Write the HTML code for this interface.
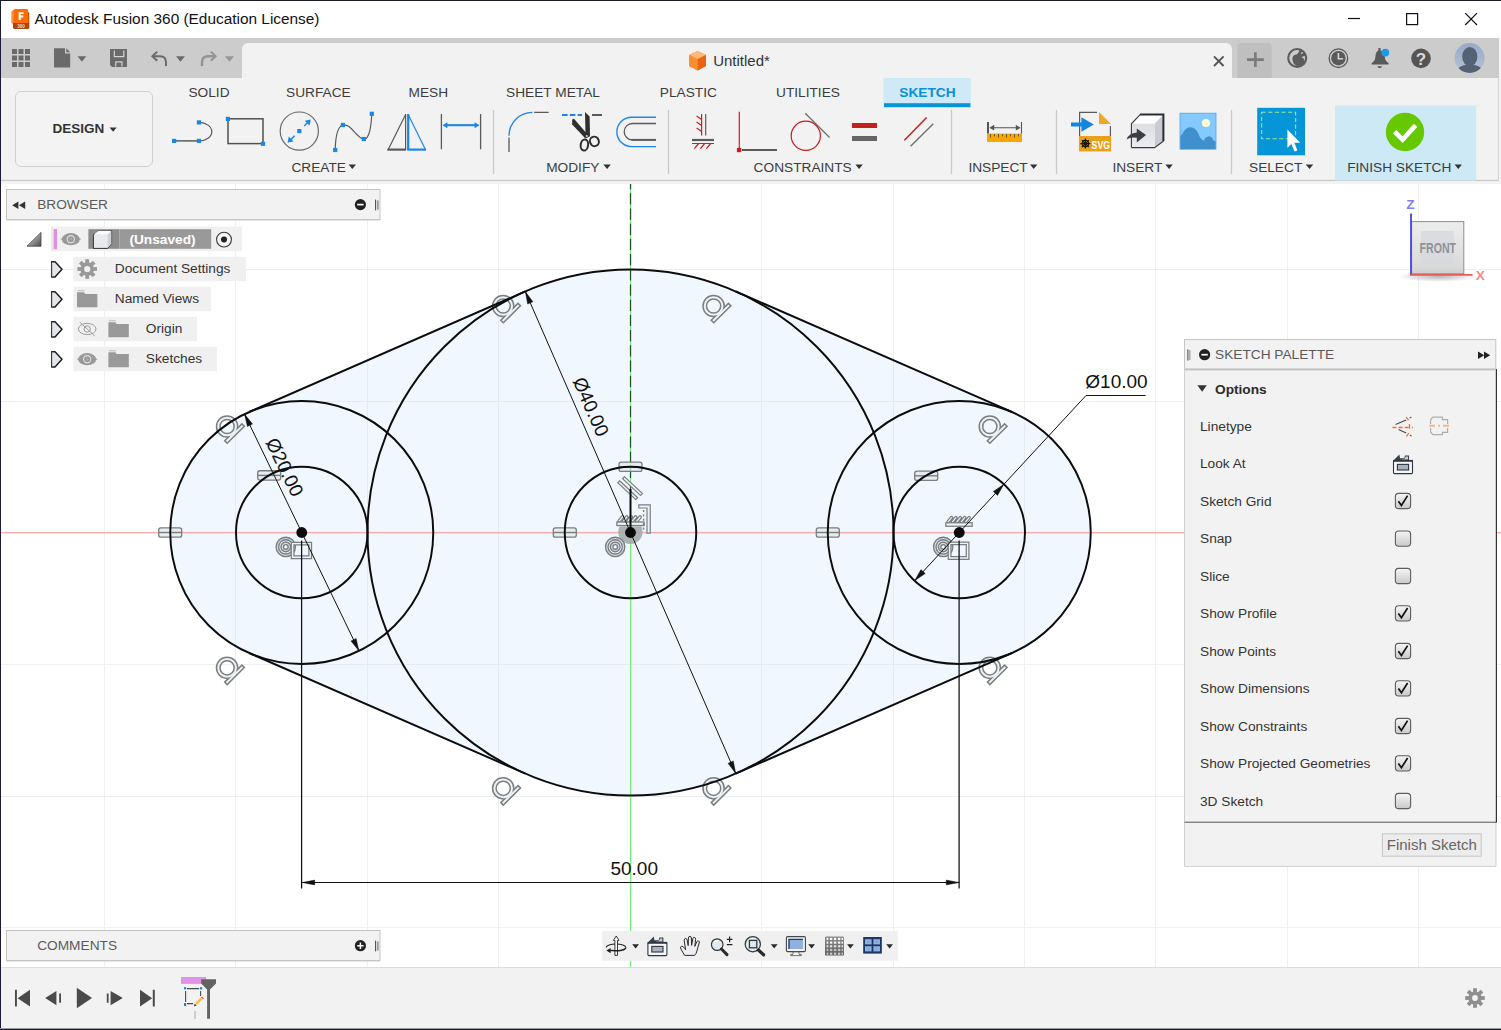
<!DOCTYPE html>
<html>
<head>
<meta charset="utf-8">
<title>Autodesk Fusion 360</title>
<style>
html,body{margin:0;padding:0;}
body{width:1501px;height:1030px;overflow:hidden;background:#fff;font-family:"Liberation Sans",sans-serif;color:#333;position:relative;}
.a{position:absolute;}
.t{position:absolute;white-space:nowrap;line-height:1;}
#titlebar{left:1px;top:1px;width:1500px;height:37px;background:#fff;}
#qat{left:1px;top:38px;width:1498px;height:40px;background:#cccccc;}
#doctab{left:242px;top:43px;width:990px;height:36px;background:#f2f2f2;border-radius:6px 6px 0 0;}
#toolbar{left:1px;top:78px;width:1500px;height:102px;background:#f2f2f2;}
#tbline{left:1px;top:180px;width:1498px;height:1px;background:#c8c8c8;box-shadow:0 -1px 0 rgba(0,0,0,0.03);}
#tbshadow{left:1px;top:181px;width:1500px;height:3px;background:linear-gradient(#eeeeee,#f3f3f3 40%);}
#rstrip{left:1499px;top:38px;width:2px;height:146px;background:#f4f4f4;}
#tbright{left:1498px;top:78px;width:1px;height:103px;background:#d2d2d2;}
#canvas{left:1px;top:184px;width:1500px;height:783px;background:#fff;}
#bottombar{left:1px;top:967px;width:1500px;height:62px;background:#f2f2f2;}
#bline{left:1px;top:967px;width:1500px;height:1px;background:#dcdcdc;}
#edgeL{left:0;top:0;width:1px;height:1030px;background:#1a1c3a;}
#edgeT{left:0;top:0;width:1501px;height:1px;background:#1a1c2c;}
#edgeB{left:0;top:1028px;width:1501px;height:2px;background:linear-gradient(#9a9ba2 0,#9a9ba2 50%,#1a1c2c 50%);}
.tab{font-size:13.5px;color:#3c3c3c;top:85px;}
.grp{font-size:13.5px;color:#3c3c3c;top:160px;}
.sep{position:absolute;top:110px;width:1px;height:64px;background:#c8c8c8;}
.panelhdr{position:absolute;background:#f2f2f2;border:1px solid #c6c6c6;box-sizing:border-box;box-shadow:0 1px 0 #d0d0d0;}
.brow{position:absolute;height:24px;background:#f0f0f0;}
.btxt{position:absolute;font-size:13.5px;color:#333;white-space:nowrap;line-height:24px;top:0;}
.plab{position:absolute;left:1200px;font-size:13.5px;color:#333;white-space:nowrap;line-height:16px;}
.cb{position:absolute;left:1395px;width:16px;height:16px;box-sizing:border-box;border:1px solid #666;border-radius:3.5px;background:linear-gradient(#f4f4f4,#cfcfcf);}
</style>
</head>
<body>
<div class="a" id="titlebar"></div>
<div class="a" id="qat"></div>
<div class="a" id="doctab"></div>
<div class="a" id="toolbar"></div>
<div class="a" id="canvas"></div>
<!--CANVAS-SVG-START--><svg class="a" id="cv" style="left:0;top:0" width="1501" height="1030" viewBox="0 0 1501 1030">
<defs><clipPath id="cvclip"><rect x="1" y="184" width="1500" height="783"/></clipPath>
<g id="gTan"><circle cx="0" cy="0" r="8.85"/><path d="M0.1 14.3 L14.8 -0.2"/></g>
<g id="gCon"><circle cx="0" cy="0" r="8.4"/><circle cx="0" cy="0" r="3.6"/></g>
<g id="gPar"><path d="M-8 -5.5 L8 9.5 M-3.2 -9.6 L12.8 5.4"/></g>
<g id="gEq"><rect x="-11.5" y="-4.65" width="23" height="9.3" rx="2.2" fill="#e4e8ea" fill-opacity="0.75" stroke="#797e82" stroke-width="1.3"/><path d="M-11.5 0H11.5" stroke="#797e82" stroke-width="1.4" fill="none"/></g>
</defs>
<g clip-path="url(#cvclip)">
<path d="M104 184h1v783h-1zM235 184h1v783h-1zM367 184h1v783h-1zM498 184h1v783h-1zM761 184h1v783h-1zM893 184h1v783h-1zM1024 184h1v783h-1zM1155 184h1v783h-1zM1287 184h1v783h-1zM1418 184h1v783h-1zM1 269h1500v1h-1500zM1 401h1500v1h-1500zM1 664h1500v1h-1500zM1 796h1500v1h-1500zM1 927h1500v1h-1500z" fill="#000" fill-opacity="0.062" stroke="none"/>
<path d="M249.15 411.98 L525.30 291.46 A263 263 0 0 1 735.70 291.46 L1011.85 411.98 A131.5 131.5 0 0 1 1011.85 653.02 L735.70 773.54 A263 263 0 0 1 525.30 773.54 L249.15 653.02 A131.5 131.5 0 0 1 249.15 411.98 Z" fill="#c8e0fa" fill-opacity="0.27" stroke="none"/>
<rect x="1" y="532" width="1500" height="1" fill="#f6acac"/><rect x="1" y="533" width="1500" height="1" fill="#f6acac" fill-opacity="0.38"/><rect x="1" y="531" width="1500" height="1" fill="#f6acac" fill-opacity="0.08"/>
<rect x="630" y="184" width="1" height="783" fill="#70ed73"/><rect x="629" y="184" width="1" height="783" fill="#ffffff" fill-opacity="0.45"/><rect x="631" y="184" width="1" height="783" fill="#d8f8dc" fill-opacity="0.6"/>
<path d="M630.5 184V489" stroke="#23502a" stroke-width="1.25" stroke-dasharray="11.2 4" stroke-dashoffset="5.9" fill="none"/>
<g><use href="#gTan" x="503.2" y="306.0" fill="none" stroke="#797e82" stroke-width="5" stroke-linecap="square"/><use href="#gTan" x="503.2" y="306.0" fill="none" stroke="#eef3f6" stroke-width="2" stroke-linecap="square"/><use href="#gTan" x="713.6" y="306.0" fill="none" stroke="#797e82" stroke-width="5" stroke-linecap="square"/><use href="#gTan" x="713.6" y="306.0" fill="none" stroke="#eef3f6" stroke-width="2" stroke-linecap="square"/><use href="#gTan" x="227.1" y="426.5" fill="none" stroke="#797e82" stroke-width="5" stroke-linecap="square"/><use href="#gTan" x="227.1" y="426.5" fill="none" stroke="#eef3f6" stroke-width="2" stroke-linecap="square"/><use href="#gTan" x="989.8" y="426.5" fill="none" stroke="#797e82" stroke-width="5" stroke-linecap="square"/><use href="#gTan" x="989.8" y="426.5" fill="none" stroke="#eef3f6" stroke-width="2" stroke-linecap="square"/><use href="#gTan" x="503.2" y="788.3" fill="none" stroke="#797e82" stroke-width="5" stroke-linecap="square"/><use href="#gTan" x="503.2" y="788.3" fill="none" stroke="#eef3f6" stroke-width="2" stroke-linecap="square"/><use href="#gTan" x="713.6" y="788.3" fill="none" stroke="#797e82" stroke-width="5" stroke-linecap="square"/><use href="#gTan" x="713.6" y="788.3" fill="none" stroke="#eef3f6" stroke-width="2" stroke-linecap="square"/><use href="#gTan" x="227.1" y="667.8" fill="none" stroke="#797e82" stroke-width="5" stroke-linecap="square"/><use href="#gTan" x="227.1" y="667.8" fill="none" stroke="#eef3f6" stroke-width="2" stroke-linecap="square"/><use href="#gTan" x="989.8" y="667.8" fill="none" stroke="#797e82" stroke-width="5" stroke-linecap="square"/><use href="#gTan" x="989.8" y="667.8" fill="none" stroke="#eef3f6" stroke-width="2" stroke-linecap="square"/><use href="#gEq" x="170.2" y="532.5"/><use href="#gEq" x="564.8" y="532.5"/><use href="#gEq" x="827.8" y="532.5"/><use href="#gEq" x="630.5" y="466.8"/><use href="#gEq" x="269.2" y="475.4"/><use href="#gEq" x="926.2" y="475.8"/><path d="M619.4 526.5 A12.2 12.2 0 1 0 641.4 526.5 Z" fill="#a4a8ab" fill-opacity="0.9"/><use href="#gCon" x="285.8" y="546.9" fill="none" stroke="#797e82" stroke-width="3.9" stroke-linecap="square"/><use href="#gCon" x="285.8" y="546.9" fill="none" stroke="#d3d8dc" stroke-width="1.2" stroke-linecap="square"/><use href="#gCon" x="615.2" y="546.9" fill="none" stroke="#797e82" stroke-width="3.9" stroke-linecap="square"/><use href="#gCon" x="615.2" y="546.9" fill="none" stroke="#d3d8dc" stroke-width="1.2" stroke-linecap="square"/><use href="#gCon" x="943.2" y="546.9" fill="none" stroke="#797e82" stroke-width="3.9" stroke-linecap="square"/><use href="#gCon" x="943.2" y="546.9" fill="none" stroke="#d3d8dc" stroke-width="1.2" stroke-linecap="square"/><use href="#gPar" x="627.7" y="488.2" fill="none" stroke="#797e82" stroke-width="3.9" stroke-linecap="square"/><use href="#gPar" x="627.7" y="488.2" fill="none" stroke="#eef3f6" stroke-width="1.5" stroke-linecap="square"/><path d="M292.6 543.6H310.2V557.2H292.6Z" fill="none" stroke="#797e82" stroke-width="3.9"/><path d="M292.6 543.6H310.2V557.2H292.6Z" fill="none" stroke="#eef3f6" stroke-width="1.4"/><path d="M949.6 543.4H967.6V558.0H949.6Z" fill="none" stroke="#797e82" stroke-width="3.9"/><path d="M949.6 543.4H967.6V558.0H949.6Z" fill="none" stroke="#eef3f6" stroke-width="1.4"/><path d="M619.1 521.2l3.4 -4.2M623.5 521.2l3.4 -4.2M627.9 521.2l3.4 -4.2M632.3 521.2l3.4 -4.2M636.7 521.2l3.4 -4.2" fill="none" stroke="#797e82" stroke-width="3.6" stroke-linecap="round"/><path d="M619.1 521.2l3.4 -4.2M623.5 521.2l3.4 -4.2M627.9 521.2l3.4 -4.2M632.3 521.2l3.4 -4.2M636.7 521.2l3.4 -4.2" fill="none" stroke="#eef3f6" stroke-width="1.2" stroke-linecap="round"/><path d="M618.6 523.8H642.4" fill="none" stroke="#797e82" stroke-width="4.8" stroke-linecap="square"/><path d="M618.6 523.8H642.4" fill="none" stroke="#eef3f6" stroke-width="2.2" stroke-linecap="square"/><path d="M948.1 521.9l3.4 -4.2M952.5 521.9l3.4 -4.2M956.9 521.9l3.4 -4.2M961.3 521.9l3.4 -4.2M965.7 521.9l3.4 -4.2" fill="none" stroke="#797e82" stroke-width="3.6" stroke-linecap="round"/><path d="M948.1 521.9l3.4 -4.2M952.5 521.9l3.4 -4.2M956.9 521.9l3.4 -4.2M961.3 521.9l3.4 -4.2M965.7 521.9l3.4 -4.2" fill="none" stroke="#eef3f6" stroke-width="1.2" stroke-linecap="round"/><path d="M947.6 524.5H970.4" fill="none" stroke="#797e82" stroke-width="4.8" stroke-linecap="square"/><path d="M947.6 524.5H970.4" fill="none" stroke="#eef3f6" stroke-width="2.2" stroke-linecap="square"/><path d="M640.4 506.4H648.6V531.6" fill="none" stroke="#797e82" stroke-width="4.4" stroke-linecap="square"/><path d="M640.4 506.4H648.6V531.6" fill="none" stroke="#eef3f6" stroke-width="2" stroke-linecap="square"/><path d="M643.6 510V530.5" fill="none" stroke="#797e82" stroke-width="1.4" stroke-dasharray="2 2.4"/></g>
<g fill="none" stroke="#0c0c0c" stroke-width="1.95"><circle cx="630.50" cy="532.50" r="263.00"/><circle cx="630.50" cy="532.50" r="65.75"/><circle cx="301.75" cy="532.50" r="131.50"/><circle cx="301.75" cy="532.50" r="65.75"/><circle cx="959.25" cy="532.50" r="131.50"/><circle cx="959.25" cy="532.50" r="65.75"/><path d="M249.15 411.98 L525.30 291.46 M735.70 291.46 L1011.85 411.98 M249.15 653.02 L525.30 773.54 M735.70 773.54 L1011.85 653.02 M630.5 489V532.5"/></g>
<path d="M525.30 291.46 L735.70 773.54 M244.52 414.11 L358.98 650.89 M1145.5 395.5 H1086.0 L914.60 580.76 M301.8 882.5H959.2" stroke="#111" stroke-width="1.0" fill="none"/>
<path d="M525.30 291.46 L532.96 301.75 L527.64 304.07 Z M735.70 773.54 L728.04 763.25 L733.36 760.93 Z M244.52 414.11 L252.57 424.10 L247.35 426.62 Z M358.98 650.89 L350.93 640.90 L356.15 638.38 Z M1003.90 484.24 L997.54 495.38 L993.28 491.44 Z M914.60 580.76 L920.96 569.62 L925.22 573.56 Z M301.75 882.50 L314.75 880.10 L314.75 884.90 Z M959.25 882.50 L946.25 884.90 L946.25 880.10 Z" fill="#111" stroke="#111" stroke-width="0.4"/>
<path d="M301.6 540.5V888.5 M959.1 540.5V888.5" stroke="#111" stroke-width="1.25" fill="none"/>
<circle cx="301.75" cy="532.50" r="5.4" fill="#0a0a0a"/>
<circle cx="630.50" cy="532.50" r="5.4" fill="#0a0a0a"/>
<circle cx="959.25" cy="532.50" r="5.4" fill="#0a0a0a"/>
<text x="584.9" y="409.3" transform="rotate(66.42 584.9 409.3)" font-size="19" text-anchor="middle" fill="#111" font-family="Liberation Sans, sans-serif">&#216;40.00</text>
<text x="278.7" y="470.0" transform="rotate(64.20 278.7 470.0)" font-size="19" text-anchor="middle" fill="#111" font-family="Liberation Sans, sans-serif">&#216;20.00</text>
<text x="1116.5" y="387.6" transform="rotate(0.00 1116.5 387.6)" font-size="19" text-anchor="middle" fill="#111" font-family="Liberation Sans, sans-serif">&#216;10.00</text>
<text x="634.2" y="875.0" transform="rotate(0.00 634.2 875.0)" font-size="19" text-anchor="middle" fill="#111" font-family="Liberation Sans, sans-serif">50.00</text>
</g></svg><!--CANVAS-SVG-END-->
<div class="a" id="tbline"></div>
<div class="a" id="tbshadow"></div>
<div class="a" id="rstrip"></div>
<div class="a" id="tbright"></div>
<div class="a" id="bottombar"></div>
<div class="a" id="bline"></div>
<!--TOP-START--><svg class="a" id="top" style="left:0;top:0" width="1501" height="184" viewBox="0 0 1501 184" font-family="Liberation Sans, sans-serif">
<!-- app logo -->
<g>
<path d="M11.3 11.2 L14 9.6 V24.2 L11.3 23.2 Z" fill="#ff8f3f"/>
<rect x="13.6" y="9" width="14.6" height="15" rx="1.6" fill="#ff6b00"/>
<path d="M28 12 L29.3 13 V24 H28 Z" fill="#c95400"/>
<path d="M13 23 H29.3 V27.6 Q29.3 29 27.9 29 H14.4 Q13 29 13 27.6 Z" fill="#a8480a"/>
<path d="M18.6 12.2 H23.6 V14.1 H20.8 V15.6 H23.2 V17.4 H20.8 V20 H18.6 Z" fill="#fff"/>
<text x="21.1" y="27.9" font-size="4.6" font-weight="700" fill="#f3d9c6" text-anchor="middle">360</text>
</g>
<text x="34.6" y="24" font-size="15.4" fill="#111">Autodesk Fusion 360 (Education License)</text>
<!-- window controls -->
<g stroke="#111" stroke-width="1.2" fill="none">
<path d="M1348 18.5 H1360"/>
<rect x="1406.6" y="13.6" width="11" height="11"/>
<path d="M1465.2 13.2 L1477 25 M1477 13.2 L1465.2 25"/>
</g>
<!-- QAT icons -->
<g fill="#6a6a6a">
<path d="M12 49h5v5h-5zM18.5 49h5v5h-5zM25 49h5v5h-5zM12 55.5h5v5h-5zM18.5 55.5h5v5h-5zM25 55.5h5v5h-5zM12 62h5v5h-5zM18.5 62h5v5h-5zM25 62h5v5h-5z"/>
<path d="M54 48.2 H65 V53.4 H70.2 V67.6 H54 Z M66.3 48.2 L70.2 52.2 H66.3 Z"/>
<path d="M77.6 56.2 H86.2 L81.9 61.8 Z"/>
<path d="M110 49 H127 V67 H112 L110 65 Z"/>
<path d="M176 56.2 H185 L180.5 61.8 Z"/>
</g>
<path d="M114.3 50.6 V56.6 H123.8 V50.6 M115.8 66.4 V61.9 H121.9 V66.4" stroke="#d4d4d4" stroke-width="1.2" fill="none"/>
<path d="M152.5 56.2 H160 Q166 56.2 166 62.5 V66" stroke="#6a6a6a" stroke-width="2" fill="none"/>
<path d="M157.2 51.6 L152.4 56.2 L157.2 60.8" stroke="#6a6a6a" stroke-width="2" fill="none"/>
<g opacity="0.8">
<path d="M215.5 56.2 H208 Q202 56.2 202 62.5 V66" stroke="#858585" stroke-width="2.4" fill="none"/>
<path d="M210.8 51.6 L215.6 56.2 L210.8 60.8" stroke="#858585" stroke-width="2" fill="none"/>
<path d="M225 56.2 H234 L229.5 61.8 Z" fill="#8a8a8a"/>
</g>
<!-- doc tab -->
<g>
<path d="M697.6 51 L706 55 V66 L697.6 70.4 L689.2 66 V55 Z" fill="#f47d20"/>
<path d="M697.6 51 L706 55 L697.6 59.2 L689.2 55 Z" fill="#ffb877"/>
<path d="M697.6 59.2 L706 55 V66 L697.6 70.4 Z" fill="#e8650e"/>
<path d="M689.2 55 L697.6 59.2 V70.4 L689.2 66 Z" fill="#fa8c33"/>
</g>
<text x="713.2" y="66" font-size="15" fill="#333">Untitled*</text>
<path d="M1214 56.4 L1223.6 66 M1223.6 56.4 L1214 66" stroke="#555" stroke-width="1.9" fill="none"/>
<!-- plus button -->
<path d="M1237.4 78 V47 Q1237.4 43 1241.4 43 H1267.8 Q1271.8 43 1271.8 47 V78 Z" fill="#bfbfbf"/>
<path d="M1255.4 52.2 V67 M1247 59.6 H1263.8" stroke="#7a7a7a" stroke-width="2.6" fill="none"/>
<!-- right icons -->
<g>
<circle cx="1297.2" cy="58" r="9" fill="none" stroke="#5c5c5c" stroke-width="2.1"/>
<path d="M1292.4 59 Q1292.2 54.8 1296.2 54.4 Q1298.6 54 1299.2 50 L1302.4 51 L1300.6 54.2 L1304.6 52.6 L1305.6 55.4 L1301.6 57 Q1306.4 59.6 1303.8 64 Q1300 67 1295.8 65.4 Q1292.6 63.4 1292.4 59 Z" fill="#5c5c5c"/>
<circle cx="1338.4" cy="58.2" r="9.3" fill="none" stroke="#5a5a5a" stroke-width="1.3"/>
<circle cx="1338.4" cy="58.2" r="7.2" fill="#5a5a5a"/>
<path d="M1338.4 53 V58.8 H1343" stroke="#d6d6d6" stroke-width="1.6" fill="none"/>
<path d="M1378.4 48 H1380.6 V50.6 Q1384.6 51.8 1384.8 57 Q1385 61 1388.6 63 V64.4 H1371.6 V63 Q1375.2 61 1375.4 57 Q1375.6 51.8 1378.4 50.6 Z" fill="#595959"/>
<path d="M1377.2 66.2 H1382.2 L1380.8 68 H1378.6 Z" fill="#595959"/>
<circle cx="1385.3" cy="52.6" r="3.9" fill="#1b9be3"/>
<circle cx="1421" cy="58.4" r="9.8" fill="#555"/>
<text x="1421" y="64.6" font-size="17" font-weight="700" fill="#d9d9d9" text-anchor="middle">?</text>
</g>
<defs><clipPath id="avc"><circle cx="1469.6" cy="58" r="15"/></clipPath>
<linearGradient id="avg" x1="0" y1="0" x2="0" y2="1"><stop offset="0" stop-color="#9aaac6"/><stop offset="1" stop-color="#b4c2d6"/></linearGradient></defs>
<circle cx="1469.6" cy="58" r="15" fill="url(#avg)"/>
<g clip-path="url(#avc)" fill="#556174">
<ellipse cx="1469.8" cy="56.6" rx="7.6" ry="9.6"/>
<path d="M1456 76 Q1456 66.5 1465 65 H1474.6 Q1483.6 66.5 1483.6 76 Z"/>
</g>
<!-- DESIGN button -->
<rect x="15.5" y="91.5" width="137" height="75" rx="5.5" fill="#f3f3f3" stroke="#d0d0d0" stroke-width="1"/>
<text x="52.4" y="133" font-size="13.5" font-weight="700" fill="#333">DESIGN</text>
<path d="M109.6 127.4 H116.6 L113.1 131.8 Z" fill="#333"/>
<!-- tabs -->
<rect x="883.4" y="78" width="87.6" height="29.2" fill="#cfe9f6"/>
<rect x="884" y="103.2" width="86.4" height="4" fill="#0696d7"/>
<g font-size="13.7" fill="#3c3c3c" text-anchor="middle">
<text x="209" y="97.2">SOLID</text>
<text x="318.4" y="97.2">SURFACE</text>
<text x="428.3" y="97.2">MESH</text>
<text x="553" y="97.2">SHEET METAL</text>
<text x="688.4" y="97.2">PLASTIC</text>
<text x="808" y="97.2">UTILITIES</text>
<text x="927.4" y="97.2" font-weight="700" fill="#0b8ed4">SKETCH</text>
</g>
<!-- separators -->
<path d="M493.5 110V174M668.5 110V174M951.5 110V174M1056.5 110V174M1231.5 110V174" stroke="#c9c9c9" stroke-width="1.3" fill="none"/>
<!-- finish sketch bg -->
<rect x="1335" y="105.5" width="141.2" height="75" fill="#cde9f6"/>
<!-- group labels -->
<g font-size="13.7" fill="#3c3c3c">
<text x="291.4" y="171.5">CREATE</text>
<text x="546.2" y="171.5">MODIFY</text>
<text x="753.6" y="171.5">CONSTRAINTS</text>
<text x="968.4" y="171.5">INSPECT</text>
<text x="1112.4" y="171.5">INSERT</text>
<text x="1249" y="171.5">SELECT</text>
<text x="1347.2" y="171.5">FINISH SKETCH</text>
</g>
<g fill="#333">
<path d="M348.6 164.4 H356 L352.3 169 Z"/>
<path d="M603.4 164.4 H610.8 L607.1 169 Z"/>
<path d="M855.4 164.4 H862.8 L859.1 169 Z"/>
<path d="M1030 164.4 H1037.4 L1033.7 169 Z"/>
<path d="M1165.4 164.4 H1172.8 L1169.1 169 Z"/>
<path d="M1305.8 164.4 H1313.2 L1309.5 169 Z"/>
<path d="M1454.6 164.4 H1462 L1458.3 169 Z"/>
</g>
<!-- CREATE icons -->
<g fill="none" stroke="#5a5a5a" stroke-width="1.2">
<path d="M174 140.9 H199" stroke-width="1.5"/><path d="M199 122.4 A12.8 9.3 0 0 1 199 141"/>
<rect x="228" y="118.8" width="35" height="24.8" stroke-width="1.5" stroke="#505050"/>
<circle cx="299.3" cy="131.1" r="19.1" stroke="#6a6a6a"/>
<path d="M335.2 150 C335.5 136 337.5 126.5 342.9 125 C351 123 356 138 363.8 139 C369.5 139.5 371.3 125 371.8 113.8"/>
<path d="M405.6 114 V150 M388 150 L405.6 114.5"/>
<path d="M387.4 149.6 H406" stroke-width="2.2"/>
<path d="M441.4 114 V149.2 M480.6 114 V149.2" stroke-width="1.3"/>
</g>
<g fill="#1c86e6">
<rect x="172" y="138.8" width="4.2" height="4.2"/><rect x="196.8" y="138.8" width="4.2" height="4.2"/><rect x="196.8" y="120.3" width="4.2" height="4.2"/>
<rect x="225.8" y="116.8" width="4.2" height="4.2"/><rect x="260.9" y="141.7" width="4.2" height="4.2"/>
<rect x="297.2" y="129" width="4.2" height="4.2"/>
<rect x="333.1" y="147.9" width="4.2" height="4.2"/><rect x="340.8" y="122.9" width="4.2" height="4.2"/><rect x="361.7" y="136.9" width="4.2" height="4.2"/><rect x="369.7" y="111.7" width="4.2" height="4.2"/>
<path d="M310.8 119.6 L309.6 125.6 L304.8 120.8 Z M287.6 142.6 L288.8 136.6 L293.6 141.4 Z"/>
<path d="M442.4 125.2 L447.4 122.2 V128.2 Z M479.6 125.2 L474.6 122.2 V128.2 Z"/>
</g>
<g fill="none" stroke="#1c86e6">
<path d="M304.2 126 L308 122.2 M290.6 139.8 L294.6 135.8" stroke-width="1.5"/>
<path d="M446 125.2 H476" stroke-width="2.1"/>
<path d="M408.2 114 V150" stroke-width="2.2"/>
<path d="M407.2 149.6 H426" stroke-width="2.2"/>
<path d="M408.4 115 L425.4 149.4" stroke-width="1.2"/>
</g>
<!-- MODIFY icons -->
<g fill="none">
<path d="M509 135.8 A23.4 23.4 0 0 1 532.4 112.4" stroke="#1c86e6" stroke-width="1.3"/>
<path d="M534.2 112.4 H548.6 M509 137.4 V152" stroke="#5a5a5a" stroke-width="1.3"/>
<path d="M562 115 H582" stroke="#1c86e6" stroke-width="2" stroke-dasharray="5.6 2.2"/>
<path d="M592 115 H602" stroke="#5a5a5a" stroke-width="2"/>
<path d="M656 117.2 H631.6 A14.7 14.7 0 0 0 631.6 146.6 H656" stroke="#1c86e6" stroke-width="1.4"/>
<path d="M656 123.5 H632.4 A8.2 8.2 0 0 0 632.4 139.9" stroke="#5a5a5a" stroke-width="1.3"/>
<path d="M631.4 139.9 H656" stroke="#5a5a5a" stroke-width="2"/>
</g>
<g fill="#2e2e2e">
<path d="M572.2 119.6 L574 118.8 L587.6 134.4 L585.2 138.2 L572.2 124.6 Z"/>
<path d="M585 112 L589.6 116.6 L590 136.2 L585.6 138.6 Z"/>
</g>
<g fill="none" stroke="#2e2e2e" stroke-width="2">
<ellipse cx="584.4" cy="145" rx="3.7" ry="5.6" transform="rotate(8 584.4 145)"/>
<ellipse cx="594.4" cy="141.4" rx="4.4" ry="4.8" transform="rotate(-20 594.4 141.4)"/>
</g>
<circle cx="586.8" cy="136" r="1" fill="#ddd"/>
<!-- CONSTRAINTS icons -->
<g fill="none" stroke="#c4201f" stroke-width="1.2">
<path d="M701.6 114 V135.6 M701.6 119.4 L696.6 116 M701.6 125.4 L696.6 122 M701.6 131.4 L696.6 128"/>
<path d="M692 143.5 H714 M698.6 143.5 L694.4 148.6 M704.6 143.5 L700.4 148.6 M710.6 143.5 L706.4 148.6"/>
<path d="M739.3 111.8 V148"/>
<circle cx="805.8" cy="135.8" r="14.6"/>
<path d="M904.4 140.3 L926.6 117.4" stroke-width="1.5"/>
</g>
<g fill="none" stroke="#5a5a5a">
<path d="M705.7 114 V135.6" stroke-width="1.2"/>
<path d="M692 140 H714" stroke-width="2.2"/>
<path d="M742 150 H777" stroke-width="2.2"/>
<path d="M805.2 113.2 L829.6 137.5" stroke-width="1.2" stroke="#6a6a6a"/>
<path d="M910.6 146.3 L933.3 123.7" stroke-width="1.3" stroke="#6a6a6a"/>
</g>
<rect x="736.9" y="147.9" width="4.3" height="4.3" fill="#c4201f"/>
<rect x="852" y="123" width="25" height="5" fill="#c4201f"/>
<rect x="852" y="136" width="25" height="5" fill="#666"/>
<!-- INSPECT icon -->
<rect x="987" y="133.6" width="35" height="8.4" fill="#f9a602"/>
<path d="M990.5 134V137.6M994.5 134V136.4M998.5 134V137.6M1002.5 134V136.4M1006.5 134V137.6M1010.5 134V136.4M1014.5 134V137.6M1018.5 134V136.4" stroke="#6e5a3a" stroke-width="1" fill="none"/>
<path d="M988 122V133.4" stroke="#555" stroke-width="2" fill="none"/>
<path d="M1021.5 122V133.4M991 127.7H1019" stroke="#555" stroke-width="1.1" fill="none"/>
<path d="M989.4 127.7L994.2 124.8V130.6ZM1020.6 127.7L1015.8 124.8V130.6Z" fill="#555"/>
<!-- INSERT icons -->
<path d="M1079.6 136 V112.4 H1097" fill="none" stroke="#5a5a5a" stroke-width="1.2"/>
<path d="M1110.4 126 V136" fill="none" stroke="#5a5a5a" stroke-width="1.2"/>
<path d="M1099 112 L1111 124 H1099 Z" fill="#eea824"/>
<rect x="1079" y="136" width="32" height="15.4" fill="#e9a11b"/>
<path d="M1071 122.5 H1081.4 V117.2 L1093.8 124.5 L1081.4 131.8 V126.5 H1071 Z" fill="#1583e0"/>
<g stroke="#1c1408" stroke-width="1.2" fill="none"><circle cx="1085.4" cy="143.6" r="3.2"/><path d="M1085.4 138.6V148.6M1080.4 143.6H1090.4M1081.9 140.1L1088.9 147.1M1088.9 140.1L1081.9 147.1"/></g>
<text x="1091.6" y="148.6" font-size="11.5" font-weight="700" fill="#fff" textLength="18.4" lengthAdjust="spacingAndGlyphs">SVG</text>
<!-- derive cube -->
<path d="M1131.4 123.8 L1140.4 114.4 H1163.6 L1154.6 123.8 Z" fill="#fdfdfd"/>
<path d="M1154.6 123.8 L1163.6 114.4 V141 L1154.6 147.6 Z" fill="#c9cbd3"/>
<defs><linearGradient id="cubef" x1="0" y1="0" x2="0" y2="1"><stop offset="0" stop-color="#dcdde1"/><stop offset="1" stop-color="#ecedf0"/></linearGradient></defs>
<rect x="1131.4" y="123.8" width="23.2" height="23.8" fill="url(#cubef)"/>
<path d="M1131.4 147.6 V123.8 L1140.4 114.4 M1131.4 147.6 H1154.6 L1163.6 141" fill="none" stroke="#3a3a3a" stroke-width="1.1"/>
<path d="M1140 114.6 H1163.4 V141" fill="none" stroke="#2c2c30" stroke-width="2"/>
<path d="M1126.6 139.4 Q1129 133.2 1136.8 132.6 V128.4 L1146 135 L1136.8 142.4 V137.8 Q1130.6 136.8 1126.6 139.4 Z" fill="#3b3e45"/>
<!-- image -->
<rect x="1180" y="113.2" width="36" height="36" fill="#84c9ff" stroke="#55a5e6" stroke-width="0.8"/>
<path d="M1180.4 149 V136 Q1182.6 134.6 1183.4 132 Q1186.6 126.6 1191.4 127.2 Q1195.6 128 1198 133 Q1200.4 139.4 1203.6 140.8 Q1205.4 136.6 1209 136.2 Q1212.4 136.6 1213.4 140.6 L1215.6 141.6 V149 Z" fill="#3f90cd"/>
<circle cx="1206" cy="123" r="4.1" fill="#fffdd0"/>
<!-- SELECT -->
<rect x="1257.2" y="107.8" width="47.8" height="47.5" fill="#0696d7"/>
<rect x="1261.6" y="112.3" width="34" height="26.4" fill="none" stroke="#9be79a" stroke-width="1.1" stroke-dasharray="4.2 2.4"/>
<path d="M1287.4 129.4 L1300.2 142.8 H1294.4 L1297.4 150.4 L1294.6 151.6 L1291.4 144 L1287.4 147.8 Z" fill="#fff"/>
<!-- FINISH -->
<circle cx="1405" cy="132" r="19.2" fill="#66c800"/>
<path d="M1394.6 131.6 L1402.6 139.6 L1415.6 125.4" fill="none" stroke="#fff" stroke-width="4.6"/>

</svg>
<!--TOP-END-->
<!--QAT-->
<!--TOOLBAR-->
<!--PANELS-START--><svg class="a" id="panels" style="left:0;top:0" width="1501" height="1030" viewBox="0 0 1501 1030" font-family="Liberation Sans, sans-serif">
<defs>
<linearGradient id="cbg" x1="0" y1="0" x2="0" y2="1"><stop offset="0" stop-color="#f6f6f6"/><stop offset="1" stop-color="#c9c9c9"/></linearGradient>
<linearGradient id="trig" x1="0" y1="0" x2="1" y2="1"><stop offset="0.3" stop-color="#bdbdbd"/><stop offset="1" stop-color="#4a4a4a"/></linearGradient>
<g id="exp"><path d="M0.7 -7.3 H4 L11 0.2 L4 8 H0.7 Z" fill="#e3e5e9" stroke="#1c1c1c" stroke-width="1.45" stroke-linejoin="round"/><path d="M1.4 -6.6 V7.2" stroke="#c4c7cd" stroke-width="1.2"/></g>
<g id="folder"><path d="M0 1.6 H7 L8.2 3.4 H20.4 V16.6 H0 Z" fill="#999"/><path d="M0.6 0.2 H7.4" stroke="#b8b8b8" stroke-width="1" fill="none"/></g>
<g id="eye"><path d="M-10 0 H10" stroke="#b5b5b5" stroke-width="1.4"/><ellipse cx="0" cy="0" rx="9" ry="6.1" fill="#999"/><circle cx="0" cy="0" r="3.6" fill="#999" stroke="#e2e2e2" stroke-width="1.1"/><circle cx="0" cy="-0.2" r="1.4" fill="#a8a8a8"/></g>
<g id="chk"><rect x="-7.6" y="-7.6" width="15.2" height="15.2" rx="3.2" fill="url(#cbg)" stroke="#5e5e5e" stroke-width="1.1"/></g>
<g id="chkd"><rect x="-7.6" y="-7.6" width="15.2" height="15.2" rx="3.2" fill="url(#cbg)" stroke="#5e5e5e" stroke-width="1.1"/><path d="M-4.6 0.2 L-1.6 4.4 L4.6 -5.4" fill="none" stroke="#111" stroke-width="1.7"/></g>
</defs>
<!-- BROWSER header -->
<rect x="6.5" y="219.2" width="373.5" height="1.3" fill="#cfcfcf"/>
<rect x="6.5" y="189.5" width="373.5" height="30" fill="#f2f2f2" stroke="#c4c4c4" stroke-width="1"/>
<path d="M18.4 201.6 V209 L12.2 205.3 Z M25.2 201.6 V209 L19 205.3 Z" fill="#333"/>
<text x="37.2" y="209.2" font-size="13.7" fill="#5a5a5a">BROWSER</text>
<circle cx="360.4" cy="204.6" r="5.6" fill="#222"/><path d="M357.2 204.6 H363.6" stroke="#fff" stroke-width="1.7"/>
<path d="M375.6 199.6 V210.4" stroke="#444" stroke-width="1"/><path d="M377.8 200.4 V209.6" stroke="#9a9a9a" stroke-width="1.8"/>
<!-- tree rows -->
<rect x="51.5" y="226.6" width="190.6" height="24.6" fill="#f0f0f0"/>
<rect x="51.5" y="226.6" width="1" height="24.6" fill="#f3d6f2"/>
<rect x="53.6" y="229" width="3.4" height="20.2" fill="#e18fe0"/>
<path d="M41 232.4 V246.2 H27 Z" fill="url(#trig)" stroke="#444" stroke-width="0.8"/>
<use href="#eye" x="70.8" y="239.2"/>
<rect x="88.4" y="229.2" width="31" height="19.6" fill="#8c8c8c"/>
<rect x="119.4" y="229.2" width="91.8" height="19.6" fill="#999"/>
<path d="M93.4 235.6 Q93.4 233.6 95.4 233.6 L98.6 230.6 H111.6 V243.6 L107.6 248.4 H93.4 Z" fill="#e9eaee" stroke="#333" stroke-width="1"/>
<path d="M107.6 234.4 L111.4 230.8 V243.6 L107.6 248 Z" fill="#cfd1d8"/>
<path d="M94 234.2 L98.6 230.8 H111.2 L107.6 234.2 Z" fill="#fdfdfd"/>
<text x="129.4" y="244" font-size="13.7" font-weight="700" fill="#fff">(Unsaved)</text>
<circle cx="224" cy="239.6" r="7.4" fill="#f6f6f6" stroke="#333" stroke-width="1.1"/><circle cx="224" cy="239.6" r="3" fill="#222"/>
<g fill="#f0f0f0">
<rect x="73.4" y="256.8" width="172.6" height="24.4"/>
<rect x="73.4" y="286.8" width="137.6" height="24.4"/>
<rect x="73.4" y="316.8" width="123.6" height="24.4"/>
<rect x="73.4" y="346.8" width="143.6" height="24.4"/>
</g>
<use href="#exp" x="51" y="269"/><use href="#exp" x="51" y="299"/><use href="#exp" x="51" y="329"/><use href="#exp" x="51" y="359"/>
<!-- gear -->
<g transform="translate(87.2 269)" fill="#999">
<circle r="6.8"/>
<g id="teeth"><rect x="-1.9" y="-9.8" width="3.8" height="19.6"/><rect x="-9.8" y="-1.9" width="19.6" height="3.8"/></g>
<use href="#teeth" transform="rotate(45)"/>
<circle r="3.1" fill="#f0f0f0"/>
</g>
<use href="#folder" x="77" y="290.6"/>
<use href="#folder" x="108.4" y="320.6"/>
<use href="#folder" x="108.4" y="350.6"/>
<g transform="translate(87.2 329)" fill="none" stroke="#9c9c9c" stroke-width="1"><ellipse cx="0" cy="0" rx="8.8" ry="5.6"/><circle r="3.2"/><path d="M-7.4 -6.8 L7.6 7"/></g>
<use href="#eye" x="87.2" y="359.2"/>
<g font-size="13.7" fill="#333">
<text x="114.8" y="273.1">Document Settings</text>
<text x="114.8" y="303.1">Named Views</text>
<text x="145.8" y="333.1">Origin</text>
<text x="145.8" y="363.1">Sketches</text>
</g>
<!-- SKETCH PALETTE -->
<rect x="1184.5" y="369" width="311.5" height="497.4" fill="#f2f2f2"/>
<path d="M1184.5 369 V866.4 H1496 V822" fill="none" stroke="#d0d0d0" stroke-width="1"/>
<path d="M1184.5 822.2 H1496.6" stroke="#555" stroke-width="1" fill="none"/>
<path d="M1496.4 369 V822.6" stroke="#333" stroke-width="1.2" fill="none"/>
<rect x="1184.8" y="368.8" width="311" height="1.6" fill="#c2c2c2"/>
<rect x="1184.5" y="339.5" width="311.3" height="29.4" fill="#f2f2f2" stroke="#c4c4c4" stroke-width="1"/>
<path d="M1187.9 349.4 V360.6" stroke="#444" stroke-width="1"/><path d="M1189.8 350 V360" stroke="#9a9a9a" stroke-width="1.2"/>
<circle cx="1204.6" cy="354.7" r="5.6" fill="#222"/><path d="M1201.4 354.7 H1207.8" stroke="#fff" stroke-width="1.7"/>
<text x="1215" y="358.6" font-size="13.7" fill="#5a5a5a">SKETCH PALETTE</text>
<path d="M1478 351.6 V359 L1484.2 355.3 Z M1484 351.6 V359 L1490.2 355.3 Z" fill="#222"/>
<path d="M1197.4 385.2 H1206.8 L1202.1 391.8 Z" fill="#333"/>
<text x="1215" y="393.8" font-size="13.7" font-weight="700" fill="#2b2b2b">Options</text>
<g font-size="13.7" fill="#333">
<text x="1200" y="430.6">Linetype</text>
<text x="1200" y="468.1">Look At</text>
<text x="1200" y="505.6">Sketch Grid</text>
<text x="1200" y="543.1">Snap</text>
<text x="1200" y="580.6">Slice</text>
<text x="1200" y="618.1">Show Profile</text>
<text x="1200" y="655.6">Show Points</text>
<text x="1200" y="693.1">Show Dimensions</text>
<text x="1200" y="730.6">Show Constraints</text>
<text x="1200" y="768.1">Show Projected Geometries</text>
<text x="1200" y="805.6">3D Sketch</text>
</g>
<use href="#chkd" x="1403" y="501"/>
<use href="#chk" x="1403" y="538.6"/>
<use href="#chk" x="1403" y="576"/>
<use href="#chkd" x="1403" y="613.4"/>
<use href="#chkd" x="1403" y="651"/>
<use href="#chkd" x="1403" y="688.4"/>
<use href="#chkd" x="1403" y="726"/>
<use href="#chkd" x="1403" y="763.4"/>
<use href="#chk" x="1403" y="801"/>
<!-- linetype icons -->
<g fill="none">
<path d="M1392.4 427.5 H1408.6" stroke="#e8762a" stroke-width="1.3" stroke-dasharray="4 2.2"/>
<path d="M1409.5 424 V428.8 M1412 427.5 H1413" stroke="#e8762a" stroke-width="1.3"/>
<path d="M1395.6 424.4 L1406.2 420 M1398.6 429.6 L1406.2 433" stroke="#4a4a4a" stroke-width="1.1"/>
<path d="M1406.2 417 L1408.6 420.4 M1408.8 433 L1406.4 436.4" stroke="#e8762a" stroke-width="1.3"/>
<path d="M1409.6 418 L1411.4 417.2 M1409.8 435.2 L1411.6 436" stroke="#666" stroke-width="1.3"/>
<path d="M1430.6 424 V419.6 L1433 417.2 H1442.4 V419.6 H1447.6 V424 M1447.6 428 V432.4 H1442.4 V434.6 H1433 L1430.6 432.2 V428" stroke="#aeaeae" stroke-width="1.2"/>
<path d="M1429.2 425.8 H1435 M1438 425.8 H1440 M1443 425.8 H1449" stroke="#f3b68a" stroke-width="2"/>
</g>
<!-- look at icon (palette) -->
<g id="lookat">
<path d="M1393.4 460.4 L1399.4 454.6 L1400 458.2 H1404.2 L1405 455.6 H1409 V460.4 Z" fill="#3a3f48"/>
<path d="M1401 459.4 L1404.6 458.8 L1405.6 456.6 H1408 V459.6 Z" fill="#c9ccd2"/>
<rect x="1393.5" y="460.6" width="19" height="13" rx="1" fill="#f6f7f9" stroke="#2f3640" stroke-width="1.1"/>
<path d="M1393.2 460.8 H1412.8" stroke="#2f3640" stroke-width="1.8"/>
<rect x="1397.4" y="464.4" width="11.2" height="5.6" fill="#aab2c0" stroke="#2f3640" stroke-width="1.1"/>
</g>
<!-- Finish Sketch button -->
<rect x="1382.4" y="833.8" width="98.8" height="22.4" fill="#ececec" stroke="#c6c6c6" stroke-width="1"/>
<text x="1431.8" y="850.2" font-size="15" fill="#666" text-anchor="middle">Finish Sketch</text>
<!-- VIEW CUBE -->
<defs><linearGradient id="vcg" x1="0" y1="0" x2="0" y2="1"><stop offset="0" stop-color="#ededed"/><stop offset="0.85" stop-color="#dadada"/><stop offset="1" stop-color="#cfcfcf"/></linearGradient>
<radialGradient id="vcs" cx="0.5" cy="0.5" r="0.5"><stop offset="0" stop-color="#000" stop-opacity="0.28"/><stop offset="1" stop-color="#000" stop-opacity="0"/></radialGradient></defs>
<ellipse cx="1438" cy="276.6" rx="40" ry="5.4" fill="url(#vcs)"/>
<rect x="1411.6" y="221.6" width="52.2" height="52.2" fill="url(#vcg)" stroke="#8e8e8e" stroke-width="1"/>
<rect x="1421" y="231" width="33" height="33" fill="#d6d8dc" opacity="0.75"/>
<text x="1437.8" y="253" font-size="14.6" font-weight="700" fill="#8f9398" text-anchor="middle" textLength="36.5" lengthAdjust="spacingAndGlyphs">FRONT</text>
<path d="M1411 213.6 V275.4" stroke="#4545e8" stroke-width="1.8" fill="none"/>
<path d="M1410.2 274.9 H1472.6" stroke="#e85a5a" stroke-width="1.9" fill="none"/>
<text x="1410.4" y="209.4" font-size="13.6" fill="#7d7df5" text-anchor="middle" font-weight="700">Z</text>
<text x="1480.2" y="279.8" font-size="13.6" fill="#f58a8a" text-anchor="middle" font-weight="700">X</text>
<!-- COMMENTS -->
<rect x="6.5" y="960.2" width="373.5" height="1.3" fill="#cfcfcf"/>
<rect x="6.5" y="930.5" width="373.5" height="30" fill="#f2f2f2" stroke="#c4c4c4" stroke-width="1"/>
<text x="37.2" y="949.9" font-size="13.7" fill="#5a5a5a">COMMENTS</text>
<circle cx="360.4" cy="945.7" r="5.6" fill="#222"/><path d="M357.2 945.7 H363.6 M360.4 942.5 V948.9" stroke="#fff" stroke-width="1.5"/>
<path d="M375.6 940.6 V951.4" stroke="#444" stroke-width="1"/><path d="M377.8 941.4 V950.6" stroke="#9a9a9a" stroke-width="1.8"/>
<!-- NAV BAR -->
<rect x="602.2" y="931" width="295.6" height="29.8" fill="#f0f0f0"/>
<g fill="#2a2a2a">
<path d="M632.2 944.2 H639 L635.6 948.6 Z"/><path d="M770.8 944.2 H777.6 L774.2 948.6 Z"/><path d="M808.2 944.2 H815 L811.6 948.6 Z"/><path d="M847 944.2 H853.8 L850.4 948.6 Z"/><path d="M886.2 944.2 H893 L889.6 948.6 Z"/>
</g>
<!-- orbit -->
<path d="M606.2 947.4 A9.8 3.4 0 0 1 625.8 947.4" fill="none" stroke="#222" stroke-width="1.1"/>
<path d="M614.9 955.4 V940.4 H613.4 L616.2 936 L619 940.4 H617.5 V955.4 Z" fill="#fafafa" stroke="#222" stroke-width="0.9"/>
<path d="M625.8 947.4 A9.8 3.4 0 0 1 612.6 950.6 H608.4" fill="none" stroke="#222" stroke-width="1.5"/>
<path d="M606.4 950.6 L610.6 948 V953.2 Z" fill="#222"/>
<!-- look at (nav) -->
<use href="#lookat" transform="translate(-745.6 482)"/>
<!-- hand -->
<path d="M684.6 955.4 L681 949.2 Q679.6 946.6 681.6 946.2 Q683.2 946 684.8 948.6 L685.6 949.8 L684.2 940.6 Q684 938.6 685.4 938.4 Q686.8 938.4 687.2 940.2 L688.2 945.6 L688.4 938 Q688.5 936.4 689.9 936.4 Q691.3 936.4 691.4 938 L691.6 945.4 L692.8 938.8 Q693.1 937.2 694.4 937.4 Q695.8 937.7 695.6 939.4 L694.8 946.4 L696.8 941.8 Q697.5 940.4 698.6 940.9 Q699.7 941.5 699.2 943 Q697.8 947.4 697 950.8 Q696.4 953.6 694.6 955.4 Z" fill="#eceef1" stroke="#2a2a2a" stroke-width="1"/>
<!-- zoom -->
<circle cx="717.2" cy="944.6" r="5.8" fill="#dfeaf0" stroke="#3a3a3a" stroke-width="1.2"/>
<path d="M714 942.4 A4 4 0 0 1 718.6 940.8" stroke="#fff" stroke-width="1.2" fill="none"/>
<path d="M721.4 949 L727 954.6" stroke="#2a2a2a" stroke-width="3" stroke-linecap="round"/>
<path d="M726.8 939.4 H732.4 M729.6 936.6 V942.2 M726.8 944.6 H732.4" stroke="#222" stroke-width="1.2" fill="none"/>
<!-- zoom window -->
<circle cx="752.8" cy="944.2" r="7.6" fill="#e4f0f2" stroke="#3a3a3a" stroke-width="1.3"/>
<rect x="749.4" y="940.4" width="7.4" height="7.4" fill="#e3e5ea" stroke="#2f3640" stroke-width="1.3"/>
<path d="M758.4 950 L763.6 954.8" stroke="#2a2a2a" stroke-width="3.2" stroke-linecap="round"/>
<!-- display -->
<rect x="786.4" y="936.6" width="19" height="15" rx="1.2" fill="#f4f4f4" stroke="#444" stroke-width="1.1"/>
<rect x="788.6" y="939" width="14.4" height="10" fill="#8fb0de"/>
<path d="M789 949 V939.4 H803" stroke="#1b3a7a" stroke-width="1.3" fill="none"/>
<path d="M793 952 H799 V954.4 H801.4 V955.6 H790.6 V954.4 H793 Z" fill="#fafafa" stroke="#555" stroke-width="0.8"/>
<!-- grid -->
<defs><linearGradient id="grg" x1="0" y1="0" x2="0" y2="1"><stop offset="0" stop-color="#8a8a8a"/><stop offset="1" stop-color="#5e5e5e"/></linearGradient></defs>
<rect x="825" y="936.4" width="19" height="19.2" rx="1.2" fill="url(#grg)"/>
<g fill="#fff">
<g id="gr1"><rect x="826.6" y="937.8" width="1.7" height="2.2"/><rect x="829.9" y="937.8" width="2.4" height="2.2"/><rect x="833.9" y="937.8" width="2.4" height="2.2"/><rect x="837.9" y="937.8" width="2.4" height="2.2"/><rect x="841.6" y="937.8" width="1.5" height="2.2"/></g>
<use href="#gr1" y="3.7" opacity="0.95"/><use href="#gr1" y="7.4" opacity="0.8"/><use href="#gr1" y="11.1" opacity="0.6"/><use href="#gr1" y="14.8" opacity="0.65"/>
</g>
<!-- viewports -->
<rect x="863.2" y="937" width="18.6" height="16.6" fill="#1f3566"/>
<g fill="#8fb0de"><rect x="865" y="939.2" width="6.6" height="5.2"/><rect x="873.4" y="939.2" width="6.6" height="5.2"/><rect x="865" y="946.2" width="6.6" height="5.2"/><rect x="873.4" y="946.2" width="6.6" height="5.2"/></g>
<path d="M867.4 941.8H869.4M875.8 941.8H877.8M867.4 948.8H869.4M875.8 948.8H877.8" stroke="#6f93c8" stroke-width="0.8"/>
<!-- TIMELINE -->
<g fill="#4a4a4a">
<path d="M15 989.8 H16.9 V1006.6 H15 Z M30 989.8 V1006.6 L17.6 998.2 Z"/>
<path d="M56.4 991 V1005.2 L45.2 998.1 Z M59.2 993.6 H61 V1002.8 H59.2 Z"/>
<path d="M76.8 987.8 V1008.2 L92 998 Z"/>
<path d="M106.8 993.6 H108.6 V1002.8 H106.8 Z M110.6 991 V1005.2 L122.8 998.1 Z"/>
<path d="M140 989.8 V1006.6 L152.2 998.2 Z M152.8 989.8 H154.8 V1006.6 H152.8 Z"/>
</g>
<rect x="181" y="977" width="25" height="6.9" fill="#e192e6"/>
<path d="M201.2 979.2 H216 V983.6 L210 989.6 V1018.8 H207.1 V989.6 L201.2 983.6 Z" fill="#636363"/>
<path d="M187 988.6 H199.2 M185.6 991 V1002 M200.6 991 V996 M187 1003.6 H193" stroke="#4a4a4a" stroke-width="1.1" fill="none"/>
<g fill="#1583e0"><rect x="184" y="987.2" width="2.2" height="2.2"/><rect x="200" y="987.2" width="2.2" height="2.2"/><rect x="184" y="1003" width="2.2" height="3"/></g>
<path d="M195.2 1003 L200.4 997.8 L202.2 999.6 L197 1004.8 Z" fill="#fdbd3f"/>
<path d="M200.6 997.2 L202.4 996.8 L203.6 998 L203.2 999.6 Z" fill="#f44"/>
<path d="M194 1006.4 L194.6 1003.6 L196.6 1005.6 Z" fill="#444"/>
<rect x="194.2" y="1011" width="1.8" height="8" fill="#cbcbcb"/>
<!-- gear (timeline settings) -->
<g transform="translate(1475 998)" fill="#8f8f8f">
<circle r="6.6"/>
<g id="teeth2"><rect x="-1.9" y="-9.8" width="3.8" height="19.6"/><rect x="-9.8" y="-1.9" width="19.6" height="3.8"/></g>
<use href="#teeth2" transform="rotate(45)"/>
<circle r="2.9" fill="#f2f2f2"/>
</g>

</svg>
<!--PANELS-END-->
<!--PALETTE-->
<!--VIEWCUBE-->
<!--NAVBAR-->
<!--TIMELINE-->
<div class="a" id="edgeL"></div>
<div class="a" id="edgeT"></div>
<div class="a" id="edgeB"></div>
</body>
</html>
